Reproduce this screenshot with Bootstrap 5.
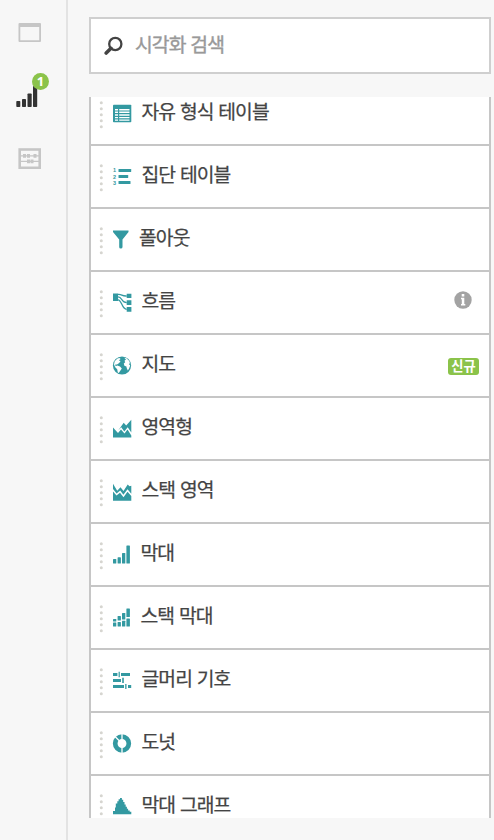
<!DOCTYPE html>
<html lang="ko">
<head>
<meta charset="utf-8">
<meta name="viewport" content="width=device-width, initial-scale=1">
<title>시각화</title>
<link href="https://cdn.jsdelivr.net/npm/bootstrap@5.3.0/dist/css/bootstrap.min.css" rel="stylesheet">
<style>
body{background:#f7f7f7;font-family:"Noto Sans CJK KR",sans-serif;height:840px;overflow:hidden;color:#444}
svg{display:block;flex:none}
.rail{width:68px;border-right:2px solid #e3e3e3;padding-top:23px}
.rail-btn{background:none;border:0;padding:0;display:block}
.rail-window{margin-left:18px;margin-bottom:43px}
.rail-vis{margin-left:16px;margin-bottom:41px}
.rail-fields{margin-left:18px}
.count{left:16px;top:-13px;width:17px;height:17px;background:#8bc34a;color:#fff;font:700 13px/17px "Noto Sans",sans-serif}
.panel{width:402px;margin-left:21px;padding-top:17px}
.search{height:57px;border:2px solid #cfcfcf;padding-left:13px}
.search input,.search input:focus{color:#999;background:none;border:0;outline:0;box-shadow:none;font-size:19.3px;letter-spacing:-.9px;word-spacing:.3px;padding:0;margin:0 0 3px 11px;height:40px;-webkit-text-stroke:.4px #999}
.search input::placeholder{color:#999;opacity:1}
.vis-list{height:721px;margin-top:23px;border:solid #c6c6c6;border-width:0 2px}
.vis-list ul{margin-top:-14px}
.vis-item{height:63px;border-bottom:2px solid #c6c6c6;padding-left:8px;padding-right:10px}
.grip{margin-top:18px;fill:#d6d5d0}
.glyph{margin:21px 0 0 8px;fill:#3399a1;stroke:none}
.label{font-size:19.3px;line-height:28px;letter-spacing:-.9px;word-spacing:.2px;margin:14px 0 0 9.5px;white-space:nowrap;-webkit-text-stroke:.25px #444}
.label-near{margin-left:7px}
.label-mid{margin-left:8.5px}
.info{margin-top:19px;margin-right:7px}
.tag-new{margin-top:23px;width:31px;height:17px;border-radius:3px;background:#8bc34a;color:#fff;font-size:13.3px;line-height:16px;font-weight:700;text-align:center}
</style>
<script src="https://cdn.jsdelivr.net/npm/bootstrap@5.3.0/dist/js/bootstrap.bundle.min.js"></script>
</head>
<body>
<svg width="0" height="0" class="position-absolute"><defs>
<g id="dots"><circle cx="2.3" cy="1.8" r="1.5"/><circle cx="2.3" cy="7.8" r="1.5"/><circle cx="2.3" cy="13.8" r="1.5"/><circle cx="2.3" cy="19.8" r="1.5"/><circle cx="2.3" cy="25.8" r="1.5"/></g>
</defs></svg>
<div class="d-flex h-100">
<nav class="rail flex-shrink-0">
  <button class="rail-btn rail-window" aria-label="창"><svg width="23" height="20"><path fill="#c6c6c6" fill-rule="evenodd" d="M1.500 0H22q1 0 1 1V18q0 1-1 1H1.500q-1 0-1-1V1q0-1 1-1zM2.300 4V17.200H21.200V4z"/></svg></button>
  <button class="rail-btn rail-vis position-relative" aria-label="시각화"><svg width="22" height="21"><g fill="#333"><rect x=".3" y="15" width="4" height="6" rx=".8"/><rect x="6" y="13" width="4" height="8" rx=".8"/><rect x="11.500" y="7.500" width="4.200" height="13.500" rx=".8"/><rect x="17" y="0" width="4.200" height="21" rx=".8"/></g></svg><span class="count position-absolute rounded-circle text-center">1</span></button>
  <button class="rail-btn rail-fields" aria-label="필드"><svg width="23" height="21"><rect x="1.700" y="1.500" width="20" height="18.300" fill="none" stroke="#c6c6c6" stroke-width="2.600"/><path d="M2 7.800H21M2 13.400H21" stroke="#c6c6c6" stroke-width="1.200"/><path d="M6.500 6v3.800M10.500 6v3.800M17 6v3.800M10.500 11.500v3.800M14 11.500v3.800" stroke="#c6c6c6" stroke-width="3"/></svg></button>
</nav>
<main class="panel flex-shrink-0">
  <div class="search bg-white d-flex align-items-center">
    <svg width="20" height="20"><circle cx="11.300" cy="8" r="6.100" fill="none" stroke="#444" stroke-width="2.300"/><path d="M7 12.300L2.200 17" stroke="#444" stroke-width="3.600" stroke-linecap="round"/></svg>
    <input type="text" class="form-control" placeholder="시각화 검색">
  </div>
  <div class="vis-list bg-white overflow-hidden">
  <ul class="list-unstyled mb-0">
    <li class="vis-item d-flex align-items-start"><svg class="grip" width="5" height="28"><use href="#dots"/></svg>
      <svg class="glyph" width="20" height="20"><rect x="1" y=".8" width="18.300" height="17.400" rx=".8"/><path fill="#fff" d="M3 5h3v1.500H3zM3 7.600h3V9H3zM3 10.300h3v1.400H3zM3 12.900h3v1.400H3zM3 15.400h3v1.400H3zM7.200 5h10.300v1.500H7.200zM7.200 7.600h10.300V9H7.200zM7.200 10.300h10.300v1.400H7.200zM7.200 12.900h10.300v1.400H7.200zM7.200 15.400h10.300v1.400H7.200z"/></svg><span class="label">자유 형식 테이블</span></li>
    <li class="vis-item d-flex align-items-start"><svg class="grip" width="5" height="28"><use href="#dots"/></svg>
      <svg class="glyph" width="20" height="20"><rect x="6.500" y="2" width="12.700" height="3" rx=".6"/><rect x="6.500" y="8" width="9.700" height="3" rx=".6"/><rect x="6.500" y="14" width="12" height="3" rx=".6"/><g font-family="Liberation Sans" font-size="5.500" font-weight="700"><text x="1" y="5.300">1</text><text x="1" y="11.500">2</text><text x="1" y="17.700">3</text></g></svg><span class="label">집단 테이블</span></li>
    <li class="vis-item d-flex align-items-start"><svg class="grip" width="5" height="28"><use href="#dots"/></svg>
      <svg class="glyph" width="20" height="20"><path d="M1 .4H16.500V2L10.500 9.500V17q0 1.500-1.700 1.500T7.200 17V9.500L1 2z"/></svg><span class="label label-near">폴아웃</span></li>
    <li class="vis-item d-flex align-items-start"><svg class="grip" width="5" height="28"><use href="#dots"/></svg>
      <svg class="glyph" width="20" height="20"><path d="M1 .5h5V8H1zM14.700.8h4.700v4.200h-4.700zM14.700 7.300h4.700v4.600h-4.700zM14.700 14h4.700v4.700h-4.700z"/><path fill="none" stroke="#3399a1" stroke-width="1.300" d="M6 1.500C10 1 9.500 3.300 14.700 3M6 3.800C10.500 3.800 9 9.700 14.700 9.700M6 6.800C10 7 9.500 16 14.700 16.300"/></svg><span class="label">흐름</span>
      <svg class="info ms-auto" width="18" height="18"><circle cx="9" cy="9" r="8.700" fill="#a3a3a3"/><path fill="#fff" d="M7.700 3h2.600v2.500H7.700zM7 6.800h3.300v6.200h1v1.500H7V13h.8V8.200H7z"/></svg></li>
    <li class="vis-item d-flex align-items-start"><svg class="grip" width="5" height="28"><use href="#dots"/></svg>
      <svg class="glyph" width="20" height="20"><circle cx="10" cy="9.500" r="9.100"/><path fill="#fff" d="M2.700 5.200L5.500 2.600 7.500 1.900 8.600 3 6.800 4.600 8.600 5 7.200 7 5 8.400 3.200 8.600 3.600 10.200 5.200 9.600 8 10.500 9.800 12.500 8.300 14.700 6.700 17 5.800 16.600 5.200 13.300 3.200 11.300 2 8.500zM12.200 1.700L14.500 2.300 17.300 5 18 7.200 16.800 7.900 18.200 9.600 17 12.700 15.800 14.400 14.700 12 14.400 10.400 12.400 9.700 11.800 7.600 13.200 6.200 12.500 4.700 14 3.600z"/></svg><span class="label">지도</span>
      <span class="tag-new ms-auto">신규</span></li>
    <li class="vis-item d-flex align-items-start"><svg class="grip" width="5" height="28"><use href="#dots"/></svg>
      <svg class="glyph" width="20" height="20"><path d="M1 8.500L6 14 9 10.500 12.500 14.500 15.500 10.500 19.300 16.500V18.600H1z"/><path d="M6.200 11.500L11.700 3.700 14.200 6.500 19.300.8V13.500L15.700 8.300 12.300 12.400 9.200 8.300z"/></svg><span class="label">영역형</span></li>
    <li class="vis-item d-flex align-items-start"><svg class="grip" width="5" height="28"><use href="#dots"/></svg>
      <svg class="glyph" width="20" height="20"><path d="M1 9.500L4.500 13.500 8 10.700 11.500 15.200 15.500 9.700 19.300 14V18.700H1z"/><path d="M1 1.800L5.200 8.700 8.500 5.300 11.500 9 15.700 2.600 17.500 4.200 19.300 3.700V11.800L15.500 7.300 11.400 12.700 8.200 8.500 4.600 11.500 1 7z"/></svg><span class="label">스택 영역</span></li>
    <li class="vis-item d-flex align-items-start"><svg class="grip" width="5" height="28"><use href="#dots"/></svg>
      <svg class="glyph" width="20" height="20"><rect x="1" y="14" width="3.300" height="4.600" rx=".6"/><rect x="5.600" y="12.300" width="3.300" height="6.300" rx=".6"/><rect x="10" y="8" width="3.300" height="10.600" rx=".6"/><rect x="14.400" y=".4" width="3.500" height="18.200" rx=".6"/></svg><span class="label label-mid">막대</span></li>
    <li class="vis-item d-flex align-items-start"><svg class="grip" width="5" height="28"><use href="#dots"/></svg>
      <svg class="glyph" width="20" height="20"><g><rect x="1" y="11" width="3.300" height="2.400" rx=".5"/><rect x="1" y="14.600" width="3.300" height="4" rx=".5"/><rect x="5.600" y="8" width="3.300" height="4.500" rx=".5"/><rect x="5.600" y="14" width="3.300" height="4.600" rx=".5"/><rect x="10" y="5" width="3.300" height="6.500" rx=".5"/><rect x="10" y="12.700" width="3.300" height="5.900" rx=".5"/><rect x="14.400" y=".4" width="3.500" height="8.700" rx=".5"/><rect x="14.400" y="10.500" width="3.500" height="8.100" rx=".5"/></g></svg><span class="label label-mid">스택 막대</span></li>
    <li class="vis-item d-flex align-items-start"><svg class="grip" width="5" height="28"><use href="#dots"/></svg>
      <svg class="glyph" width="20" height="20"><path d="M1 2h4.400v3H1zM6.600.8h1.200v5.400H6.600zM9 2h9v3H9zM1 8h8v3H1zM10.200 6.800h1.600v5.200h-1.600zM1 14h11v3H1zM13.200 13h1.300v5h-1.300zM16 14h3.200v3H16z"/></svg><span class="label">글머리 기호</span></li>
    <li class="vis-item d-flex align-items-start"><svg class="grip" width="5" height="28"><use href="#dots"/></svg>
      <svg class="glyph" width="20" height="20"><circle cx="10" cy="9.500" r="6.800" fill="none" stroke="#3399a1" stroke-width="4.700"/><path stroke="#fff" stroke-width="1.300" d="M10 0V5.500M10 13V19M7.500 7L2.500 2"/></svg><span class="label">도넛</span></li>
    <li class="vis-item d-flex align-items-start"><svg class="grip" width="5" height="28"><use href="#dots"/></svg>
      <svg class="glyph" width="20" height="20"><path d="M1 17.200V14H3V10.500H3.800V6.500H5.300V4.200H6.600V2.200H8V1H9.900V2.800H11.200V5H12.500V7.500H13.700V9.700H14.900V11.800H16.100V13.500H17.700V14.700H19.300V17.200z"/></svg><span class="label">막대 그래프</span></li>
  </ul>
  </div>
</main>
</div>
</body>
</html>
